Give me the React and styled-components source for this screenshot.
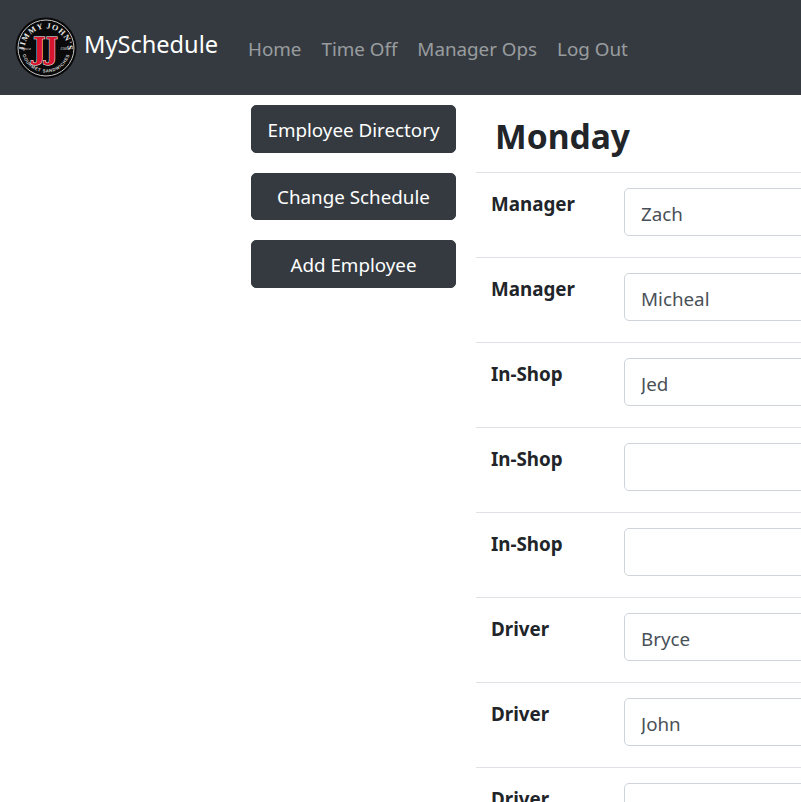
import React from "react";
import styled, { createGlobalStyle } from "styled-components";

const Global = createGlobalStyle`
  html, body { margin: 0; padding: 0; background: #fff; }
  body { font-family: "Noto Sans", "Open Sans", "Liberation Sans", sans-serif; font-size: 18.8px; color: #212529; }
  * { box-sizing: border-box; }
`;

const Page = styled.div`
  width: 801px;
  height: 802px;
  overflow: hidden;
`;

const Navbar = styled.nav`
  height: 95px;
  background: #343a40;
  display: flex;
  align-items: center;
  padding: 0 15px;
`;

const Brand = styled.a`
  display: flex;
  align-items: center;
  gap: 7px;
  color: #fff;
  font-size: 23.6px;
  width: 233px;
  flex: none;
  line-height: 32px;
`;

const BrandName = styled.span`
  margin-bottom: 8px;
`;

const NavLinks = styled.div`
  display: flex;
  gap: 20px;
  padding-top: 3px;
`;

const NavLink = styled.a`
  color: rgba(255, 255, 255, 0.5);
`;

const Body = styled.div`
  display: flex;
  gap: 20px;
  padding-left: 251px;
`;

const Sidebar = styled.aside`
  width: 205px;
  flex: none;
  display: flex;
  flex-direction: column;
  gap: 20px;
  padding-top: 10px;
`;

const ActionButton = styled.button`
  height: ${(p) => p.$h || 48}px;
  background: #343a40;
  color: #fff;
  border: 1px solid #343a40;
  border-radius: 5px;
  font: inherit;
  padding: ${(p) => (p.$h ? 0 : 2)}px 0 0;
`;

const Schedule = styled.main`
  flex: none;
  width: 600px;
`;

const DayTitle = styled.h1`
  margin: 0;
  height: 77px;
  padding: 16px 0 0 19px;
  font-size: 33.6px;
  font-weight: 700;
  line-height: 50px;
`;

const Row = styled.div`
  display: flex;
  height: 85px;
  border-top: 1px solid #dee2e6;
  padding: 15px 15px 0;
`;

const RoleLabel = styled.label`
  width: 133px;
  flex: none;
  font-weight: 700;
  line-height: 32px;
`;

const NameInput = styled.input`
  flex: 1;
  height: 48px;
  border: 1px solid #ced4da;
  border-radius: 5px;
  padding: 4px 16px 0;
  font: inherit;
  color: #495057;
  background: #fff;
`;

const Logo = () => (
  <svg width="62" height="62" viewBox="0 0 62 62" role="img" aria-label="Jimmy John's">
    <circle cx="31" cy="31" r="30.5" fill="#0a0a0a" />
    <circle cx="31" cy="31" r="28" fill="none" stroke="#c4c4c4" strokeWidth="1" />
    <defs>
      <path id="logoTop" d="M9.5 33 A21.5 21.5 0 0 1 52.5 33" />
      <path id="logoBottom" d="M6.5 31 A24.5 24.5 0 0 0 55.5 31" />
    </defs>
    <text fill="#ececec" fontFamily="Liberation Serif, serif" fontWeight="700" fontSize="8" letterSpacing="0.8">
      <textPath href="#logoTop" startOffset="50%" textAnchor="middle">JIMMY JOHN'S</textPath>
    </text>
    <text fill="#d4d4d4" fontFamily="Liberation Sans, sans-serif" fontWeight="700" fontSize="4.4" letterSpacing="0.5">
      <textPath href="#logoBottom" startOffset="50%" textAnchor="middle">GOURMET SANDWICHES</textPath>
    </text>
    <text
      x="18"
      y="41.5"
      fill="#d8152f"
      stroke="#fff"
      strokeWidth="1"
      paintOrder="stroke"
      fontFamily="DejaVu Serif, serif"
      fontWeight="700"
      fontSize="30"
      textLength="25"
      lengthAdjust="spacingAndGlyphs"
    >
      JJ
    </text>
    <text x="6" y="33" fill="#ddd" fontFamily="Liberation Serif, serif" fontStyle="italic" fontSize="4.6">Since</text>
    <text x="45" y="33" fill="#ddd" fontFamily="Liberation Serif, serif" fontStyle="italic" fontSize="4.6">1983</text>
  </svg>
);

const rows = [
  ["Manager", "Zach"],
  ["Manager", "Micheal"],
  ["In-Shop", "Jed"],
  ["In-Shop", ""],
  ["In-Shop", ""],
  ["Driver", "Bryce"],
  ["Driver", "John"],
  ["Driver", ""],
];

export default function App() {
  return (
    <Page>
      <Global />
      <Navbar>
        <Brand>
          <Logo />
          <BrandName>MySchedule</BrandName>
        </Brand>
        <NavLinks>
          <NavLink>Home</NavLink>
          <NavLink>Time Off</NavLink>
          <NavLink>Manager Ops</NavLink>
          <NavLink>Log Out</NavLink>
        </NavLinks>
      </Navbar>
      <Body>
        <Sidebar>
          <ActionButton>Employee Directory</ActionButton>
          <ActionButton $h={47}>Change Schedule</ActionButton>
          <ActionButton>Add Employee</ActionButton>
        </Sidebar>
        <Schedule>
          <DayTitle>Monday</DayTitle>
          {rows.map(([role, name], i) => (
            <Row key={i}>
              <RoleLabel>{role}</RoleLabel>
              <NameInput defaultValue={name} />
            </Row>
          ))}
        </Schedule>
      </Body>
    </Page>
  );
}
